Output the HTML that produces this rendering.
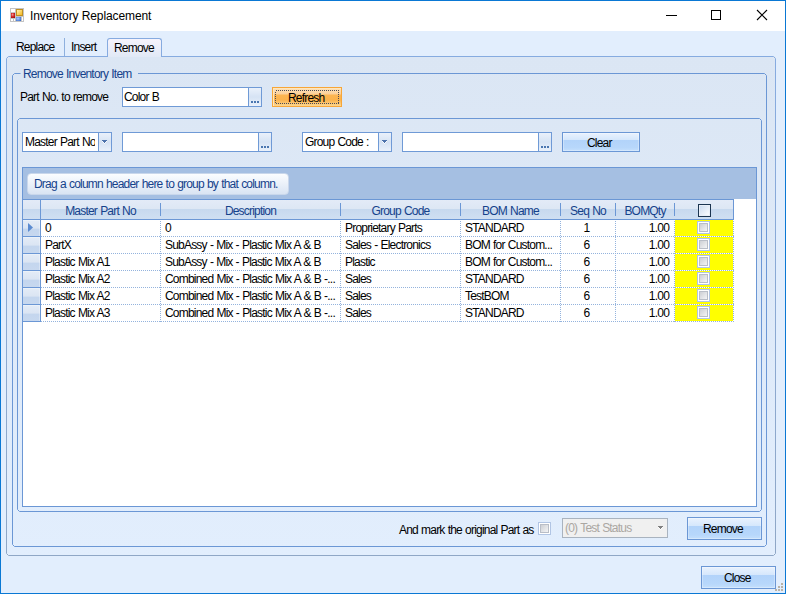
<!DOCTYPE html><html><head><meta charset="utf-8"><style>
html,body{margin:0;padding:0;}
body{width:786px;height:594px;overflow:hidden;position:relative;background:#e2eefd;font-family:'Liberation Sans', sans-serif;}
.t{position:absolute;white-space:nowrap;font-family:'Liberation Sans', sans-serif;}
.b{position:absolute;box-sizing:border-box;}
svg{position:absolute;left:0;top:0;}
</style></head><body>
<div class="b" style="left:0px;top:0px;width:786px;height:594px;border:1px solid #0a78d4;"></div>
<div class="b" style="left:1px;top:1px;width:784px;height:30px;background:#fff;"></div>
<div class="b" style="left:6px;top:56px;width:770px;height:500px;border-radius:3px;background:linear-gradient(#dbe6f4,#e2eefd);"></div>
<div class="b" style="left:107px;top:38px;width:55px;height:19px;border:1px solid #86abe0;border-bottom:none;border-radius:3px 3px 0 0;background:linear-gradient(#f6f3fc,#e1e9f6);"></div>
<div class="b" style="left:22px;top:167px;width:735px;height:340px;background:#fff;border:1px solid #6b97d5;"></div>
<div class="b" style="left:23px;top:168px;width:733px;height:31px;background:#a5bfe2;"></div>
<div class="b" style="left:27px;top:173px;width:262px;height:22px;border-radius:4px;border:1px solid #c9d7eb;background:linear-gradient(#fbfdff,#d9e4f3);"></div>
<div class="b" style="left:22px;top:199px;width:712px;height:21px;border:1px solid #6b97d5;border-right:1px solid #6b97d5;background:linear-gradient(#e3ebf7 0,#dde7f4 45%,#c7d9ee 50%,#cfdff2 100%);"></div>
<div class="b" style="left:22px;top:220px;width:19px;height:17px;border:1px solid #6b97d5;border-top:none;background:linear-gradient(#e4ecf7 0,#dbe5f3 50%,#c4d6ee 58%,#c7d8ef 100%);box-shadow:inset -1px 1px 0 rgba(255,255,255,0.3);"></div>
<div class="b" style="left:22px;top:237px;width:19px;height:17px;border:1px solid #6b97d5;border-top:none;background:linear-gradient(#e4ecf7 0,#dbe5f3 50%,#c4d6ee 58%,#c7d8ef 100%);box-shadow:inset -1px 1px 0 rgba(255,255,255,0.3);"></div>
<div class="b" style="left:22px;top:254px;width:19px;height:17px;border:1px solid #6b97d5;border-top:none;background:linear-gradient(#e4ecf7 0,#dbe5f3 50%,#c4d6ee 58%,#c7d8ef 100%);box-shadow:inset -1px 1px 0 rgba(255,255,255,0.3);"></div>
<div class="b" style="left:22px;top:271px;width:19px;height:17px;border:1px solid #6b97d5;border-top:none;background:linear-gradient(#e4ecf7 0,#dbe5f3 50%,#c4d6ee 58%,#c7d8ef 100%);box-shadow:inset -1px 1px 0 rgba(255,255,255,0.3);"></div>
<div class="b" style="left:22px;top:288px;width:19px;height:17px;border:1px solid #6b97d5;border-top:none;background:linear-gradient(#e4ecf7 0,#dbe5f3 50%,#c4d6ee 58%,#c7d8ef 100%);box-shadow:inset -1px 1px 0 rgba(255,255,255,0.3);"></div>
<div class="b" style="left:22px;top:305px;width:19px;height:17px;border:1px solid #6b97d5;border-top:none;background:linear-gradient(#e4ecf7 0,#dbe5f3 50%,#c4d6ee 58%,#c7d8ef 100%);box-shadow:inset -1px 1px 0 rgba(255,255,255,0.3);"></div>
<div class="b" style="left:675px;top:220px;width:58px;height:16px;background:#ffff00;"></div>
<div class="b" style="left:675px;top:237px;width:58px;height:16px;background:#ffff00;"></div>
<div class="b" style="left:675px;top:254px;width:58px;height:16px;background:#ffff00;"></div>
<div class="b" style="left:675px;top:271px;width:58px;height:16px;background:#ffff00;"></div>
<div class="b" style="left:675px;top:288px;width:58px;height:16px;background:#ffff00;"></div>
<div class="b" style="left:675px;top:305px;width:58px;height:16px;background:#ffff00;"></div>
<svg width="786" height="594" viewBox="0 0 786 594"><defs><linearGradient id="tpb" x1="0" y1="0" x2="0" y2="1"><stop offset="0" stop-color="#86abe0"/><stop offset="1" stop-color="#8fa7c6"/></linearGradient></defs><path d="M107.5,56.5 H8.5 L6.5,58.5 V553.5 L8.5,555.5 H773.5 L775.5,553.5 V58.5 L773.5,56.5 H161.5" fill="none" stroke="url(#tpb)" stroke-width="1"/><path d="M64.5,38 V56" stroke="#8eb0de" stroke-width="1"/><path d="M20.5,73.5 H14.5 L12.5,75.5 V544.5 L14.5,546.5 H764.5 L766.5,544.5 V75.5 L764.5,73.5 H138" fill="none" stroke="#6b97d5" stroke-width="1"/><path d="M19.5,118.5 L17.5,120.5 V509.5 L19.5,511.5 H759.5 L761.5,509.5 V120.5 L759.5,118.5 Z" fill="none" stroke="#6b97d5" stroke-width="1"/><path d="M160.5,203 V216" stroke="#6b97d5" stroke-width="1"/><path d="M340.5,203 V216" stroke="#6b97d5" stroke-width="1"/><path d="M460.5,203 V216" stroke="#6b97d5" stroke-width="1"/><path d="M560.5,203 V216" stroke="#6b97d5" stroke-width="1"/><path d="M615.5,203 V216" stroke="#6b97d5" stroke-width="1"/><path d="M674.5,203 V216" stroke="#6b97d5" stroke-width="1"/><path d="M40.5,200 V219" stroke="#6b97d5" stroke-width="1"/><path d="M41,236.5 H734" stroke="#94b3dd" stroke-width="1" stroke-dasharray="1 1"/><path d="M41,253.5 H734" stroke="#94b3dd" stroke-width="1" stroke-dasharray="1 1"/><path d="M41,270.5 H734" stroke="#94b3dd" stroke-width="1" stroke-dasharray="1 1"/><path d="M41,287.5 H734" stroke="#94b3dd" stroke-width="1" stroke-dasharray="1 1"/><path d="M41,304.5 H734" stroke="#94b3dd" stroke-width="1" stroke-dasharray="1 1"/><path d="M41,321.5 H734" stroke="#94b3dd" stroke-width="1" stroke-dasharray="1 1"/><path d="M160.5,221 V322" stroke="#94b3dd" stroke-width="1" stroke-dasharray="1 1"/><path d="M340.5,221 V322" stroke="#94b3dd" stroke-width="1" stroke-dasharray="1 1"/><path d="M460.5,221 V322" stroke="#94b3dd" stroke-width="1" stroke-dasharray="1 1"/><path d="M560.5,221 V322" stroke="#94b3dd" stroke-width="1" stroke-dasharray="1 1"/><path d="M615.5,221 V322" stroke="#94b3dd" stroke-width="1" stroke-dasharray="1 1"/><path d="M674.5,221 V322" stroke="#94b3dd" stroke-width="1" stroke-dasharray="1 1"/><path d="M733.5,221 V322" stroke="#94b3dd" stroke-width="1" stroke-dasharray="1 1"/><path d="M28,223 L33,227.5 L28,232 Z" fill="#5b8bd0"/></svg>
<svg style="left:10px;top:8px" width="14" height="14" viewBox="0 0 14 14" shape-rendering="crispEdges"><defs><linearGradient id="gy" x1="0" y1="0" x2="1" y2="1"><stop offset="0" stop-color="#fff3b0"/><stop offset="1" stop-color="#f5b820"/></linearGradient><radialGradient id="gr" cx="0.4" cy="0.35" r="0.7"><stop offset="0" stop-color="#f4a0a0"/><stop offset="0.5" stop-color="#d83030"/><stop offset="1" stop-color="#a01010"/></radialGradient><radialGradient id="gb" cx="0.4" cy="0.4" r="0.7"><stop offset="0" stop-color="#b0ccff"/><stop offset="1" stop-color="#3a6fd0"/></radialGradient></defs><rect x="0" y="0" width="14" height="14" fill="#c4c4c4"/><rect x="1" y="1" width="4" height="3" fill="#fff"/><rect x="1" y="11" width="2" height="2" fill="#fff"/><rect x="4" y="11" width="1" height="2" fill="#fff"/><rect x="12" y="9" width="1" height="4" fill="#fff"/><rect x="6" y="1" width="7" height="7" fill="#c09020"/><rect x="7" y="2" width="5" height="5" fill="url(#gy)"/><rect x="1" y="5" width="4" height="5" fill="url(#gr)"/><rect x="6" y="9" width="5" height="4" fill="url(#gb)"/></svg>
<div class="t" style="left:30px;top:9px;font-size:12px;line-height:14px;color:#000;letter-spacing:-0.1px;word-spacing:0px;">Inventory Replacement</div>
<div class="b" style="left:666px;top:15px;width:11px;height:1px;background:#000;"></div>
<div class="b" style="left:711px;top:10px;width:10px;height:10px;border:1px solid #000;"></div>
<svg style="left:756px;top:9px" width="12" height="12" viewBox="0 0 12 12"><path d="M1,1 L11,11 M11,1 L1,11" stroke="#000" stroke-width="1.1"/></svg>
<div class="t" style="left:16px;top:40px;font-size:12px;line-height:14px;color:#000;letter-spacing:-0.8px;word-spacing:0.6px;">Replace</div>
<div class="t" style="left:71px;top:40px;font-size:12px;line-height:14px;color:#000;letter-spacing:-0.8px;word-spacing:0.6px;">Insert</div>
<div class="t" style="left:114px;top:41px;font-size:12px;line-height:14px;color:#000;letter-spacing:-0.8px;word-spacing:0.6px;">Remove</div>
<div class="t" style="left:23px;top:67px;font-size:12px;line-height:14px;color:#15428b;letter-spacing:-0.8px;word-spacing:0.6px;">Remove Inventory Item</div>
<div class="t" style="left:20px;top:90px;font-size:12px;line-height:14px;color:#000;letter-spacing:-0.8px;word-spacing:0.6px;">Part No. to remove</div>
<div class="b" style="left:122px;top:87px;width:140px;height:20px;border:1px solid #6f9ad6;background:#fff;"></div>
<div class="b" style="left:248px;top:87px;width:14px;height:20px;border:1px solid #6f9ad6;background:linear-gradient(#eaf1fb,#d6e3f4 50%,#eaf1fb);"></div>
<div class="b" style="left:251px;top:101px;width:2px;height:2px;background:#4a76b0;"></div>
<div class="b" style="left:254px;top:101px;width:2px;height:2px;background:#4a76b0;"></div>
<div class="b" style="left:257px;top:101px;width:2px;height:2px;background:#4a76b0;"></div>
<div class="t" style="left:124px;top:90px;font-size:12px;line-height:14px;color:#000;letter-spacing:-0.8px;word-spacing:0.6px;">Color B</div>
<div class="b" style="left:272px;top:87px;width:70px;height:20px;border:1px solid #f7a638;background:linear-gradient(#fde2b8 0px,#fcd09a 6px,#fcb552 7px,#fbb24c 12px,#fdd68e 18px);box-shadow:inset 1px 1px 0 #fde6c0;"></div>
<svg style="left:275px;top:90px" width="64" height="14" viewBox="0 0 64 14" shape-rendering="crispEdges"><rect x="0.5" y="0.5" width="63" height="13" fill="none" stroke="#4a4a55" stroke-dasharray="1 1"/></svg>
<div class="t" style="left:288px;top:91px;font-size:12px;line-height:14px;color:#000;letter-spacing:-0.8px;word-spacing:0.6px;">Refresh</div>
<div class="b" style="left:22px;top:132px;width:90px;height:20px;border:1px solid #6f9ad6;background:#fff;"></div>
<div class="b" style="left:98px;top:132px;width:14px;height:20px;border:1px solid #6f9ad6;background:linear-gradient(#eaf1fb,#d6e3f4 50%,#eaf1fb);"></div>
<div class="b" style="left:102px;top:140px;width:5px;height:1px;background:#4f74ad;"></div>
<div class="b" style="left:103px;top:141px;width:3px;height:1px;background:#4f74ad;"></div>
<div class="b" style="left:104px;top:142px;width:1px;height:1px;background:#4f74ad;"></div>
<div class="b" style="left:102px;top:141px;width:1px;height:1px;background:rgba(255,255,255,0.85);"></div>
<div class="b" style="left:106px;top:141px;width:1px;height:1px;background:rgba(255,255,255,0.85);"></div>
<div class="b" style="left:103px;top:142px;width:1px;height:1px;background:rgba(255,255,255,0.85);"></div>
<div class="b" style="left:105px;top:142px;width:1px;height:1px;background:rgba(255,255,255,0.85);"></div>
<div class="b" style="left:104px;top:143px;width:1px;height:1px;background:rgba(255,255,255,0.85);"></div>
<div class="b" style="left:23px;top:133px;width:72px;height:18px;overflow:hidden"><div class="t" style="left:2px;top:2px;font-size:12px;line-height:14px;letter-spacing:-0.8px;word-spacing:0.6px">Master Part No</div></div>
<div class="b" style="left:122px;top:132px;width:150px;height:20px;border:1px solid #6f9ad6;background:#fff;"></div>
<div class="b" style="left:258px;top:132px;width:14px;height:20px;border:1px solid #6f9ad6;background:linear-gradient(#eaf1fb,#d6e3f4 50%,#eaf1fb);"></div>
<div class="b" style="left:261px;top:146px;width:2px;height:2px;background:#4a76b0;"></div>
<div class="b" style="left:264px;top:146px;width:2px;height:2px;background:#4a76b0;"></div>
<div class="b" style="left:267px;top:146px;width:2px;height:2px;background:#4a76b0;"></div>
<div class="b" style="left:302px;top:132px;width:90px;height:20px;border:1px solid #6f9ad6;background:#fff;"></div>
<div class="b" style="left:378px;top:132px;width:14px;height:20px;border:1px solid #6f9ad6;background:linear-gradient(#eaf1fb,#d6e3f4 50%,#eaf1fb);"></div>
<div class="b" style="left:382px;top:140px;width:5px;height:1px;background:#4f74ad;"></div>
<div class="b" style="left:383px;top:141px;width:3px;height:1px;background:#4f74ad;"></div>
<div class="b" style="left:384px;top:142px;width:1px;height:1px;background:#4f74ad;"></div>
<div class="b" style="left:382px;top:141px;width:1px;height:1px;background:rgba(255,255,255,0.85);"></div>
<div class="b" style="left:386px;top:141px;width:1px;height:1px;background:rgba(255,255,255,0.85);"></div>
<div class="b" style="left:383px;top:142px;width:1px;height:1px;background:rgba(255,255,255,0.85);"></div>
<div class="b" style="left:385px;top:142px;width:1px;height:1px;background:rgba(255,255,255,0.85);"></div>
<div class="b" style="left:384px;top:143px;width:1px;height:1px;background:rgba(255,255,255,0.85);"></div>
<div class="b" style="left:303px;top:133px;width:72px;height:18px;overflow:hidden"><div class="t" style="left:2px;top:2px;font-size:12px;line-height:14px;letter-spacing:-0.8px;word-spacing:0.6px">Group Code :</div></div>
<div class="b" style="left:402px;top:132px;width:150px;height:20px;border:1px solid #6f9ad6;background:#fff;"></div>
<div class="b" style="left:538px;top:132px;width:14px;height:20px;border:1px solid #6f9ad6;background:linear-gradient(#eaf1fb,#d6e3f4 50%,#eaf1fb);"></div>
<div class="b" style="left:541px;top:146px;width:2px;height:2px;background:#4a76b0;"></div>
<div class="b" style="left:544px;top:146px;width:2px;height:2px;background:#4a76b0;"></div>
<div class="b" style="left:547px;top:146px;width:2px;height:2px;background:#4a76b0;"></div>
<div class="b" style="left:562px;top:132px;width:78px;height:20px;border:1px solid #6b97d5;background:linear-gradient(#e9f2fe 0,#d5e7fc 38%,#b2d3fa 38%,#b7d7fb 80%,#c4dffc 100%);box-shadow:inset 0 0 0 1px rgba(255,255,255,0.3);"></div>
<div class="t" style="left:587px;top:136px;font-size:12px;line-height:14px;color:#000;letter-spacing:-0.8px;word-spacing:0.6px;">Clear</div>
<div class="t" style="left:34px;top:177px;font-size:12px;line-height:14px;color:#15428b;letter-spacing:-0.8px;word-spacing:0.6px;">Drag a column header here to group by that column.</div>
<div class="t" style="left:41px;top:204px;width:119px;text-align:center;font-size:12px;line-height:14px;color:#15428b;letter-spacing:-0.8px;word-spacing:0.6px">Master Part No</div>
<div class="t" style="left:161px;top:204px;width:179px;text-align:center;font-size:12px;line-height:14px;color:#15428b;letter-spacing:-0.8px;word-spacing:0.6px">Description</div>
<div class="t" style="left:341px;top:204px;width:119px;text-align:center;font-size:12px;line-height:14px;color:#15428b;letter-spacing:-0.8px;word-spacing:0.6px">Group Code</div>
<div class="t" style="left:461px;top:204px;width:99px;text-align:center;font-size:12px;line-height:14px;color:#15428b;letter-spacing:-0.8px;word-spacing:0.6px">BOM Name</div>
<div class="t" style="left:561px;top:204px;width:54px;text-align:center;font-size:12px;line-height:14px;color:#15428b;letter-spacing:-0.8px;word-spacing:0.6px">Seq No</div>
<div class="t" style="left:616px;top:204px;width:58px;text-align:center;font-size:12px;line-height:14px;color:#15428b;letter-spacing:-0.8px;word-spacing:0.6px">BOMQty</div>
<div class="b" style="left:698px;top:204px;width:13px;height:13px;border:1px solid #1c3550;background:linear-gradient(135deg,#c9d9ee,#ffffff);box-shadow:inset 0 0 0 1px #e8eef7"></div>
<div class="t" style="left:45px;top:221px;font-size:12px;line-height:14px;color:#000;letter-spacing:-0.8px;word-spacing:0.6px;">0</div>
<div class="t" style="left:165px;top:221px;font-size:12px;line-height:14px;color:#000;letter-spacing:-0.8px;word-spacing:0.6px;">0</div>
<div class="t" style="left:345px;top:221px;font-size:12px;line-height:14px;color:#000;letter-spacing:-0.8px;word-spacing:0.6px;">Proprietary Parts</div>
<div class="t" style="left:465px;top:221px;font-size:12px;line-height:14px;color:#000;letter-spacing:-0.8px;word-spacing:0.6px;">STANDARD</div>
<div class="t" style="left:559px;top:221px;width:55px;text-align:center;font-size:12px;line-height:14px;letter-spacing:-0.8px;word-spacing:0.6px">1</div>
<div class="t" style="left:616px;top:221px;width:53px;text-align:right;font-size:12px;line-height:14px;letter-spacing:-0.8px;word-spacing:0.6px">1.00</div>
<div class="b" style="left:697px;top:221px;width:13px;height:13px;border:1px solid #b1c5e4;box-shadow:inset 0 0 0 1px #fff,inset 0 0 0 2px #b9bec7;background:linear-gradient(135deg,#c2c5cb,#ffffff)"></div>
<div class="t" style="left:45px;top:238px;font-size:12px;line-height:14px;color:#000;letter-spacing:-0.8px;word-spacing:0.6px;">PartX</div>
<div class="t" style="left:165px;top:238px;font-size:12px;line-height:14px;color:#000;letter-spacing:-0.8px;word-spacing:0.6px;">SubAssy - Mix - Plastic Mix A &amp; B</div>
<div class="t" style="left:345px;top:238px;font-size:12px;line-height:14px;color:#000;letter-spacing:-0.8px;word-spacing:0.6px;">Sales - Electronics</div>
<div class="t" style="left:465px;top:238px;font-size:12px;line-height:14px;color:#000;letter-spacing:-0.8px;word-spacing:0.6px;">BOM for Custom...</div>
<div class="t" style="left:559px;top:238px;width:55px;text-align:center;font-size:12px;line-height:14px;letter-spacing:-0.8px;word-spacing:0.6px">6</div>
<div class="t" style="left:616px;top:238px;width:53px;text-align:right;font-size:12px;line-height:14px;letter-spacing:-0.8px;word-spacing:0.6px">1.00</div>
<div class="b" style="left:697px;top:238px;width:13px;height:13px;border:1px solid #b1c5e4;box-shadow:inset 0 0 0 1px #fff,inset 0 0 0 2px #b9bec7;background:linear-gradient(135deg,#c2c5cb,#ffffff)"></div>
<div class="t" style="left:45px;top:255px;font-size:12px;line-height:14px;color:#000;letter-spacing:-0.8px;word-spacing:0.6px;">Plastic Mix A1</div>
<div class="t" style="left:165px;top:255px;font-size:12px;line-height:14px;color:#000;letter-spacing:-0.8px;word-spacing:0.6px;">SubAssy - Mix - Plastic Mix A &amp; B</div>
<div class="t" style="left:345px;top:255px;font-size:12px;line-height:14px;color:#000;letter-spacing:-0.8px;word-spacing:0.6px;">Plastic</div>
<div class="t" style="left:465px;top:255px;font-size:12px;line-height:14px;color:#000;letter-spacing:-0.8px;word-spacing:0.6px;">BOM for Custom...</div>
<div class="t" style="left:559px;top:255px;width:55px;text-align:center;font-size:12px;line-height:14px;letter-spacing:-0.8px;word-spacing:0.6px">6</div>
<div class="t" style="left:616px;top:255px;width:53px;text-align:right;font-size:12px;line-height:14px;letter-spacing:-0.8px;word-spacing:0.6px">1.00</div>
<div class="b" style="left:697px;top:255px;width:13px;height:13px;border:1px solid #b1c5e4;box-shadow:inset 0 0 0 1px #fff,inset 0 0 0 2px #b9bec7;background:linear-gradient(135deg,#c2c5cb,#ffffff)"></div>
<div class="t" style="left:45px;top:272px;font-size:12px;line-height:14px;color:#000;letter-spacing:-0.8px;word-spacing:0.6px;">Plastic Mix A2</div>
<div class="t" style="left:165px;top:272px;font-size:12px;line-height:14px;color:#000;letter-spacing:-0.8px;word-spacing:0.6px;">Combined Mix - Plastic Mix A &amp; B -...</div>
<div class="t" style="left:345px;top:272px;font-size:12px;line-height:14px;color:#000;letter-spacing:-0.8px;word-spacing:0.6px;">Sales</div>
<div class="t" style="left:465px;top:272px;font-size:12px;line-height:14px;color:#000;letter-spacing:-0.8px;word-spacing:0.6px;">STANDARD</div>
<div class="t" style="left:559px;top:272px;width:55px;text-align:center;font-size:12px;line-height:14px;letter-spacing:-0.8px;word-spacing:0.6px">6</div>
<div class="t" style="left:616px;top:272px;width:53px;text-align:right;font-size:12px;line-height:14px;letter-spacing:-0.8px;word-spacing:0.6px">1.00</div>
<div class="b" style="left:697px;top:272px;width:13px;height:13px;border:1px solid #b1c5e4;box-shadow:inset 0 0 0 1px #fff,inset 0 0 0 2px #b9bec7;background:linear-gradient(135deg,#c2c5cb,#ffffff)"></div>
<div class="t" style="left:45px;top:289px;font-size:12px;line-height:14px;color:#000;letter-spacing:-0.8px;word-spacing:0.6px;">Plastic Mix A2</div>
<div class="t" style="left:165px;top:289px;font-size:12px;line-height:14px;color:#000;letter-spacing:-0.8px;word-spacing:0.6px;">Combined Mix - Plastic Mix A &amp; B -...</div>
<div class="t" style="left:345px;top:289px;font-size:12px;line-height:14px;color:#000;letter-spacing:-0.8px;word-spacing:0.6px;">Sales</div>
<div class="t" style="left:465px;top:289px;font-size:12px;line-height:14px;color:#000;letter-spacing:-0.8px;word-spacing:0.6px;">TestBOM</div>
<div class="t" style="left:559px;top:289px;width:55px;text-align:center;font-size:12px;line-height:14px;letter-spacing:-0.8px;word-spacing:0.6px">6</div>
<div class="t" style="left:616px;top:289px;width:53px;text-align:right;font-size:12px;line-height:14px;letter-spacing:-0.8px;word-spacing:0.6px">1.00</div>
<div class="b" style="left:697px;top:289px;width:13px;height:13px;border:1px solid #b1c5e4;box-shadow:inset 0 0 0 1px #fff,inset 0 0 0 2px #b9bec7;background:linear-gradient(135deg,#c2c5cb,#ffffff)"></div>
<div class="t" style="left:45px;top:306px;font-size:12px;line-height:14px;color:#000;letter-spacing:-0.8px;word-spacing:0.6px;">Plastic Mix A3</div>
<div class="t" style="left:165px;top:306px;font-size:12px;line-height:14px;color:#000;letter-spacing:-0.8px;word-spacing:0.6px;">Combined Mix - Plastic Mix A &amp; B -...</div>
<div class="t" style="left:345px;top:306px;font-size:12px;line-height:14px;color:#000;letter-spacing:-0.8px;word-spacing:0.6px;">Sales</div>
<div class="t" style="left:465px;top:306px;font-size:12px;line-height:14px;color:#000;letter-spacing:-0.8px;word-spacing:0.6px;">STANDARD</div>
<div class="t" style="left:559px;top:306px;width:55px;text-align:center;font-size:12px;line-height:14px;letter-spacing:-0.8px;word-spacing:0.6px">6</div>
<div class="t" style="left:616px;top:306px;width:53px;text-align:right;font-size:12px;line-height:14px;letter-spacing:-0.8px;word-spacing:0.6px">1.00</div>
<div class="b" style="left:697px;top:306px;width:13px;height:13px;border:1px solid #b1c5e4;box-shadow:inset 0 0 0 1px #fff,inset 0 0 0 2px #b9bec7;background:linear-gradient(135deg,#c2c5cb,#ffffff)"></div>
<div class="t" style="left:399px;top:523px;font-size:12px;line-height:14px;color:#000;letter-spacing:-0.8px;word-spacing:0.6px;">And mark the original Part as</div>
<div class="b" style="left:538px;top:522px;width:13px;height:13px;border:1px solid #b1c5e4;box-shadow:inset 0 0 0 1px #fff,inset 0 0 0 2px #b9bec7;background:linear-gradient(135deg,#c2c5cb,#ffffff)"></div>
<div class="b" style="left:562px;top:518px;width:106px;height:20px;border:1px solid #a9b3bf;background:#f0f0f0;"></div>
<div class="t" style="left:565px;top:521px;font-size:12px;line-height:14px;color:#aba7a2;letter-spacing:-0.8px;word-spacing:0.6px;">(0) Test Status</div>
<div class="b" style="left:658px;top:526px;width:5px;height:1px;background:#808080;"></div>
<div class="b" style="left:659px;top:527px;width:3px;height:1px;background:#808080;"></div>
<div class="b" style="left:660px;top:528px;width:1px;height:1px;background:#808080;"></div>
<div class="b" style="left:658px;top:527px;width:1px;height:1px;background:rgba(255,255,255,0.9);"></div>
<div class="b" style="left:662px;top:527px;width:1px;height:1px;background:rgba(255,255,255,0.9);"></div>
<div class="b" style="left:659px;top:528px;width:1px;height:1px;background:rgba(255,255,255,0.9);"></div>
<div class="b" style="left:661px;top:528px;width:1px;height:1px;background:rgba(255,255,255,0.9);"></div>
<div class="b" style="left:660px;top:529px;width:1px;height:1px;background:rgba(255,255,255,0.9);"></div>
<div class="b" style="left:687px;top:517px;width:75px;height:23px;border:1px solid #6b97d5;background:linear-gradient(#e9f2fe 0,#d5e7fc 38%,#b2d3fa 38%,#b7d7fb 80%,#c4dffc 100%);box-shadow:inset 0 0 0 1px rgba(255,255,255,0.3);"></div>
<div class="t" style="left:703px;top:522px;font-size:12px;line-height:14px;color:#000;letter-spacing:-0.8px;word-spacing:0.6px;">Remove</div>
<div class="b" style="left:701px;top:566px;width:75px;height:23px;border:1px solid #6b97d5;background:linear-gradient(#e9f2fe 0,#d5e7fc 38%,#b2d3fa 38%,#b7d7fb 80%,#c4dffc 100%);box-shadow:inset 0 0 0 1px rgba(255,255,255,0.3);"></div>
<div class="t" style="left:724px;top:571px;font-size:12px;line-height:14px;color:#000;letter-spacing:-0.8px;word-spacing:0.6px;">Close</div>
<div class="b" style="left:781px;top:583px;width:2px;height:2px;background:#b9b2a6;"></div>
<div class="b" style="left:778px;top:586px;width:2px;height:2px;background:#b9b2a6;"></div>
<div class="b" style="left:781px;top:586px;width:2px;height:2px;background:#b9b2a6;"></div>
<div class="b" style="left:775px;top:589px;width:2px;height:2px;background:#b9b2a6;"></div>
<div class="b" style="left:778px;top:589px;width:2px;height:2px;background:#b9b2a6;"></div>
<div class="b" style="left:781px;top:589px;width:2px;height:2px;background:#b9b2a6;"></div>
</body></html>
